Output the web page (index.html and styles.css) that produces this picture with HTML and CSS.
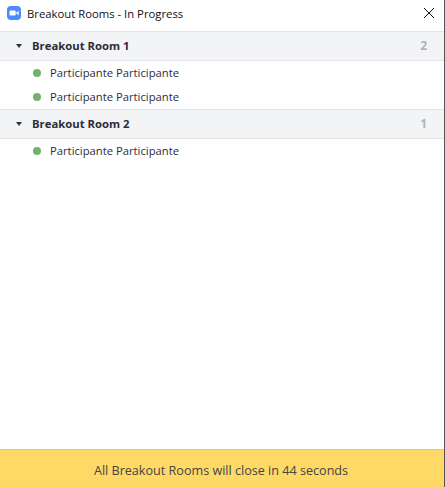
FILE: index.html
```html
<!DOCTYPE html>
<html lang="en">
<head>
    <meta charset="UTF-8">
    <meta name="viewport" content="width=device-width, initial-scale=1.0">
    <title>Breakout Rooms - In Progress</title>
    <link rel="stylesheet" href="styles.css">
</head>
<body>
    <div class="window">
        <div class="titlebar">
            <svg class="logo" width="14" height="14" viewBox="0 0 14 14">
                <rect width="14" height="14" rx="4" fill="#4a8cff"/>
                <rect x="2.5" y="4.5" width="6.2" height="5" rx="1.2" fill="#fff"/>
                <path d="M9.3 6.5 L11.6 4.8 V9.2 L9.3 7.5 Z" fill="#fff"/>
            </svg>
            <span class="title">Breakout Rooms - In Progress</span>
            <svg class="close" width="12" height="12" viewBox="0 0 12 12">
                <path d="M1 1 L11 11 M11 1 L1 11" stroke="#111" stroke-width="1" fill="none"/>
            </svg>
        </div>

        <div class="rooms">
            <div class="room">
                <span class="arrow"></span>
                <span class="room-name">Breakout Room 1</span>
                <span class="count">2</span>
            </div>
            <div class="person"><span class="dot"></span>Participante Participante</div>
            <div class="person"><span class="dot"></span>Participante Participante</div>

            <div class="room">
                <span class="arrow"></span>
                <span class="room-name">Breakout Room 2</span>
                <span class="count">1</span>
            </div>
            <div class="person"><span class="dot"></span>Participante Participante</div>
        </div>

        <div class="notice">All Breakout Rooms will close in 44 seconds</div>
    </div>
</body>
</html>
```

FILE: styles.css
```css
body{
    margin: 0;
    padding: 0;
    font-family: "Open Sans", "Noto Sans", sans-serif;
    background: #fff;
}
.window{
    height: 487px;
    display: flex;
    flex-direction: column;
    border-right: 1px solid #555;
    overflow: hidden;
}
.titlebar{
    height: 31px;
    display: flex;
    align-items: center;
    padding: 0 9px 5px 7px;
    box-sizing: border-box;
    flex-shrink: 0;
}
.logo{
    margin-right: 6px;
}
.title{
    font-size: 11.3px;
    color: #111;
    flex: 1;
}
.rooms{
    flex: 1;
}
.room{
    height: 30px;
    box-sizing: border-box;
    display: flex;
    align-items: center;
    padding: 0 17px 1px 16px;
    background: #f3f4f6;
    border-top: 1px solid #e4e4e6;
    border-bottom: 1px solid #e4e4e6;
}
.arrow{
    width: 0;
    height: 0;
    border-left: 3px solid transparent;
    border-right: 3px solid transparent;
    border-top: 4px solid #333;
    margin-right: 10px;
}
.room-name{
    font-size: 11.3px;
    font-weight: 700;
    color: #2d2d3a;
    flex: 1;
}
.count{
    font-size: 12px;
    font-weight: 700;
    color: #b0b3b8;
}
.person{
    height: 24px;
    display: flex;
    align-items: center;
    padding: 0 0 1px 33px;
    box-sizing: border-box;
    font-size: 11.25px;
    color: #2d2d3a;
}
.dot{
    width: 8px;
    height: 8px;
    border-radius: 50%;
    background: #73b36f;
    margin-right: 9px;
}
.notice{
    height: 38px;
    box-sizing: border-box;
    flex-shrink: 0;
    display: flex;
    align-items: center;
    justify-content: center;
    padding: 4px 2px 0 0;
    background: #ffd966;
    border-top: 1px solid #c8c8c8;
    font-size: 12.6px;
    color: #444;
}
```
